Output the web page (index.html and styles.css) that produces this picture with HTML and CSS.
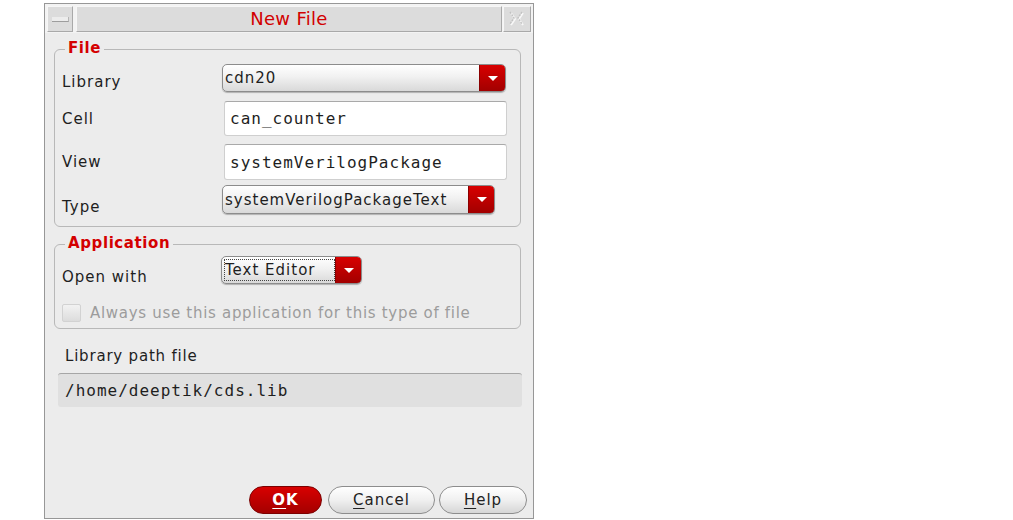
FILE: index.html
```html
<!DOCTYPE html>
<html>
<head>
<meta charset="utf-8">
<title>New File</title>
<link rel="stylesheet" href="styles.css">
</head>
<body>
<div class="window">
  <div class="titlebar">
    <div class="tb-btn tb-min"><span class="min-glyph"></span></div>
    <div class="tb-btn tb-title">New File</div>
    <div class="tb-btn tb-close">
      <svg width="20" height="18" viewBox="0 0 20 18">
        <path d="M4 3 L8 9 L4 15" fill="none" stroke="#f7f7f7" stroke-width="2"/>
        <path d="M16 3 L12 9 L16 15" fill="none" stroke="#f7f7f7" stroke-width="2"/>
        <path d="M3 2 L7 8 L3 14" fill="none" stroke="#c2c2c2" stroke-width="1.4" stroke-dasharray="2 1"/>
        <path d="M15 2 L11 8 L15 14" fill="none" stroke="#c2c2c2" stroke-width="1.4" stroke-dasharray="2 1"/>
      </svg>
    </div>
  </div>
  <div class="content">
    <div class="group group-file">
      <div class="legend">File</div>
      <div class="row row-lib">
        <span class="label">Library</span>
        <div class="combo combo-lib"><span class="combo-text">cdn20</span><span class="combo-arrow"><span class="tri"></span></span></div>
      </div>
      <div class="row row-cell">
        <span class="label">Cell</span>
        <div class="field field-cell">can_counter</div>
      </div>
      <div class="row row-view">
        <span class="label">View</span>
        <div class="field field-view">systemVerilogPackage</div>
      </div>
      <div class="row row-type">
        <span class="label label-type">Type</span>
        <div class="combo combo-type"><span class="combo-text">systemVerilogPackageText</span><span class="combo-arrow"><span class="tri"></span></span></div>
      </div>
    </div>

    <div class="group group-app">
      <div class="legend">Application</div>
      <div class="row row-open">
        <span class="label label-open">Open with</span>
        <div class="combo combo-open"><span class="combo-text focus">Text Editor</span><span class="combo-arrow"><span class="tri"></span></span></div>
      </div>
      <div class="check-row">
        <span class="checkbox"></span>
        <span class="check-text">Always use this application for this type of file</span>
      </div>
    </div>

    <div class="path-label">Library path file</div>
    <div class="path-field">/home/deeptik/cds.lib</div>

    <div class="buttons">
      <div class="btn btn-ok"><u>O</u>K</div>
      <div class="btn btn-cancel"><u>C</u>ancel</div>
      <div class="btn btn-help"><u>H</u>elp</div>
    </div>
  </div>
</div>
</body>
</html>
```

FILE: styles.css
```css
html, body {
  margin: 0;
  padding: 0;
  background: #ffffff;
}

body {
  font-family: "DejaVu Sans", "Liberation Sans", sans-serif;
  color: #1e1e1e;
}

.window {
  margin: 3px 0 0 44px;
  width: 490px;
  height: 516px;
  box-sizing: border-box;
  border: 1px solid #979797;
  background: #ececec;
  display: flex;
  flex-direction: column;
}

/* ---------- title bar ---------- */
.titlebar {
  display: flex;
  height: 26px;
  padding: 2px 2px 1px 2px;
  background: #f3f3f3;
}

.tb-btn {
  box-sizing: border-box;
  height: 26px;
  background: #dcdcdc;
  border-top: 1px solid #f6f6f6;
  border-left: 1px solid #f6f6f6;
  border-bottom: 1px solid #a9a9a9;
  border-right: 1px solid #a9a9a9;
  display: flex;
  align-items: center;
  justify-content: center;
}

.tb-min {
  width: 26px;
}

.min-glyph {
  display: block;
  width: 16px;
  height: 4px;
  background: #ececec;
  border-bottom: 1px solid #9d9d9d;
  border-right: 1px solid #b5b5b5;
}

.tb-title {
  width: 426px;
  margin-left: 3px;
  color: #d20000;
  font-size: 18px;
  letter-spacing: 0.3px;
  padding-bottom: 2px;
}

.tb-close {
  width: 28px;
  margin-left: 1px;
}

/* ---------- content ---------- */
.content {
  flex: 1;
  display: flex;
  flex-direction: column;
  padding: 0 6px 4px 9px;
}

.group {
  border: 1px solid #b8b8b8;
  border-radius: 6px;
  margin-right: 6px;
  padding: 0 13px 0 7px;
}

.group-file {
  margin-top: 16px;
  padding-bottom: 12px;
}

.group-app {
  margin-top: 17px;
  padding-bottom: 6px;
}

.legend {
  width: fit-content;
  margin: -11px 0 0 3px;
  padding: 0 3px;
  background: #ececec;
  color: #d40000;
  font-weight: bold;
  font-size: 15px;
  line-height: 18px;
  letter-spacing: 0.6px;
}

.row {
  display: flex;
  align-items: flex-start;
}

.label {
  width: 160px;
  flex: none;
  font-size: 15px;
  line-height: 18px;
  letter-spacing: 1px;
  margin-top: 9px;
  margin-bottom: -30px;
}

.label-type {
  margin-top: 13px;
}

.label-open {
  margin-top: 12px;
}

.row-lib { margin-top: 7px; }
.row-cell { margin-top: 9px; }
.row-view { margin-top: 8px; }
.row-type { margin-top: 5px; }
.row-open { margin-top: 4px; }

/* ---------- combos ---------- */
.combo {
  box-sizing: border-box;
  display: flex;
  height: 28px;
  border: 1px solid #8c8c8c;
  border-radius: 5px;
  overflow: hidden;
  background: linear-gradient(#ffffff 0%, #f1f1f1 45%, #d9d9d9 100%);
  box-shadow: 0 1px 1px rgba(0, 0, 0, 0.25);
}

.combo-lib { width: 284px; }
.combo-type { width: 273px; height: 29px; }
.combo-open { width: 141px; margin-left: -1px; }

.combo-text {
  flex: 1;
  padding-left: 2px;
  font-size: 15px;
  letter-spacing: 1px;
  display: flex;
  align-items: center;
  white-space: nowrap;
}

.combo-text.focus {
  margin: 2px 0 2px 2px;
  border: 1px dotted #444;
  padding-left: 0;
}

.combo-arrow {
  width: 25px;
  flex: none;
  background: linear-gradient(#d80000, #a20000);
  border-left: 1px solid #8a0000;
  display: flex;
  align-items: center;
  justify-content: center;
}

.tri {
  width: 0;
  height: 0;
  border-left: 5px solid transparent;
  border-right: 5px solid transparent;
  border-top: 5px solid #ffffff;
}

/* ---------- text fields ---------- */
.field {
  box-sizing: border-box;
  width: 283px;
  margin-left: 2px;
  background: #ffffff;
  border: 1px solid #cfcfcf;
  border-top-color: #a9a9a9;
  border-radius: 3px;
  padding-left: 5px;
  font-family: "DejaVu Sans Mono", "Liberation Mono", monospace;
  font-size: 16px;
  letter-spacing: 1px;
  display: flex;
  align-items: center;
}

.field-cell { height: 35px; }
.field-view { height: 36px; }

/* ---------- checkbox ---------- */
.check-row {
  display: flex;
  align-items: center;
  margin-top: 20px;
  height: 18px;
}

.checkbox {
  box-sizing: border-box;
  width: 19px;
  height: 18px;
  border: 1px solid #d2d2d2;
  border-radius: 2px;
  background: linear-gradient(#f2f2f2, #dcdcdc);
}

.check-text {
  margin-left: 9px;
  color: #9c9c9c;
  font-size: 15px;
  letter-spacing: 0.7px;
}

/* ---------- library path ---------- */
.path-label {
  margin: 18px 0 0 11px;
  font-size: 15px;
  line-height: 18px;
  letter-spacing: 0.8px;
}

.path-field {
  box-sizing: border-box;
  height: 34px;
  margin: 8px 5px 0 4px;
  background: #e0e0e0;
  border-top: 1px solid #a6a6a6;
  border-radius: 3px;
  padding-left: 7px;
  font-family: "DejaVu Sans Mono", "Liberation Mono", monospace;
  font-size: 16px;
  letter-spacing: 1px;
  display: flex;
  align-items: center;
}

/* ---------- buttons ---------- */
.buttons {
  margin-top: auto;
  display: flex;
  justify-content: flex-end;
}

.btn {
  box-sizing: border-box;
  height: 28px;
  border-radius: 14px;
  border: 1px solid #8d8d8d;
  background: linear-gradient(#ffffff 0%, #f0f0f0 50%, #d6d6d6 100%);
  font-size: 15px;
  letter-spacing: 1px;
  display: flex;
  align-items: center;
  justify-content: center;
  color: #222;
}

.btn u {
  text-underline-offset: 3px;
}

.btn-ok {
  width: 73px;
  background: linear-gradient(#d80000, #a40000);
  border-color: #7c0000;
  color: #ffffff;
  font-weight: bold;
}

.btn-cancel {
  width: 107px;
  margin-left: 6px;
}

.btn-help {
  width: 88px;
  margin-left: 4px;
}
```
